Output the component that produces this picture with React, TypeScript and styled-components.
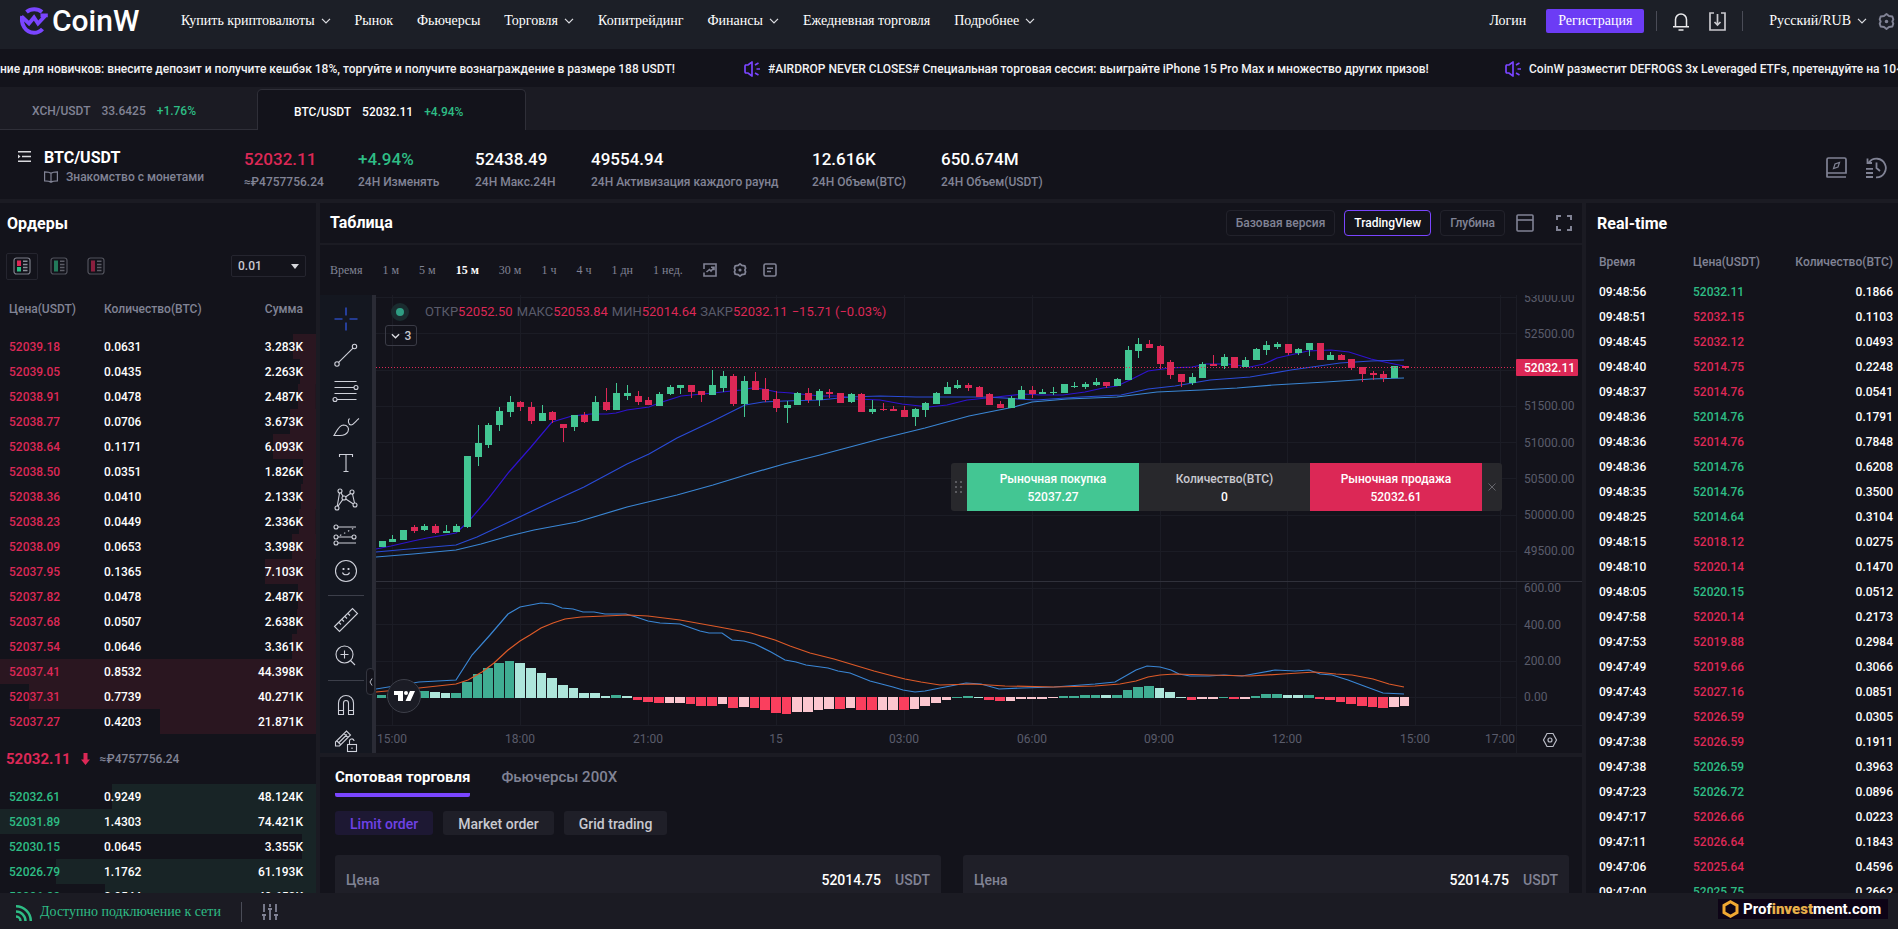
import React from 'react';
import styled, { createGlobalStyle, css } from 'styled-components';

const color = {
  page: '#13131b',
  bar: '#1b1b23',
  header: '#1c1f27',
  field: '#1f1f28',
  line: '#25252f',
  muted: '#818395',
  axis: '#5a5c6b',
  text: '#ffffff',
  soft: '#c8c9d0',
  up: '#2ebd85',
  upFill: '#43c693',
  down: '#dc2856',
  brand: '#7a45ff',
};
const serif = "'Liberation Serif', serif";
const sans = "Roboto, 'Liberation Sans', sans-serif";

const GlobalStyle = createGlobalStyle`
  *, *::before, *::after { box-sizing: border-box; }
  html, body, #root { height: 100%; }
  body { margin: 0; background: ${color.page}; color: ${color.text}; font: 500 12px/16px ${sans}; overflow: hidden; }
  button, input, select { font: inherit; color: inherit; background: none; border: 0; padding: 0; margin: 0; }
  button { cursor: pointer; white-space: nowrap; }
  a { color: inherit; text-decoration: none; }
  h1, h2, p { margin: 0; }
  svg { display: block; flex: none; }
`;

/* ---------- page frame ---------- */

const Page = styled.div`
  display: flex;
  flex-direction: column;
  height: 100vh;
  overflow: hidden;
`;

const Panels = styled.main`
  flex: 1;
  min-height: 0;
  display: grid;
  grid-template-columns: 316px minmax(0, 1fr) 312px;
  gap: 4px;
  padding-top: 4px;
  background: ${color.bar};
`;

const Panel = styled.section`
  display: flex;
  flex-direction: column;
  min-width: 0;
  min-height: 0;
  overflow: hidden;
  background: ${color.page};
`;

const Title = styled.h2<{ $pad?: number }>`
  flex: none;
  font-size: 16px;
  font-weight: 700;
  line-height: 42px;
  padding-left: ${p => p.$pad ?? 0}px;
`;

/* ---------- header ---------- */

const Header = styled.header`
  display: flex;
  flex: none;
  align-items: flex-start;
  height: 49px;
  padding: 0 3px 0 20px;
  background: ${color.header};
  font: 14px/42px ${serif};
  white-space: nowrap;
`;

const Logo = styled.a`
  display: flex;
  align-items: center;
  gap: 3px;
  width: 161px;
  height: 42px;
  font: 500 30px/42px ${sans};
`;

const Nav = styled.nav`
  display: flex;
  gap: 24px;
  flex: 1;
`;

const NavItem = styled.button`
  display: flex;
  align-items: center;
  gap: 6px;
  height: 41px;
`;

const Account = styled.div`
  display: flex;
  align-items: center;
  height: 42px;
`;

const Register = styled.button`
  width: 98px;
  height: 24px;
  margin: 0 12px 0 20px;
  border-radius: 2px;
  background: #6c3cf5;
  line-height: 24px;
`;

const Divider = styled.span<{ $gap?: number }>`
  width: 1px;
  height: 20px;
  margin: 0 ${p => p.$gap ?? 0}px 0 0;
  background: #4a4c57;
`;

const IconButton = styled.button<{ $left?: number; $right?: number }>`
  display: flex;
  margin-left: ${p => p.$left ?? 0}px;
  margin-right: ${p => p.$right ?? 0}px;
`;

/* ---------- announcements ---------- */

const Announcements = styled.div`
  display: flex;
  flex: none;
  align-items: center;
  gap: 88px;
  height: 38px;
  padding-top: 1px;
  overflow: hidden;
  white-space: nowrap;
  color: #f2f2f4;
`;

const Announcement = styled.a<{ $width?: number }>`
  display: flex;
  flex: none;
  align-items: center;
  gap: 8px;
  width: ${p => (p.$width ? `${p.$width}px` : 'auto')};
`;

/* ---------- pair tabs ---------- */

const PairTabs = styled.div`
  display: flex;
  flex: none;
  align-items: flex-end;
  height: 43px;
  background: ${color.bar};
`;

const PairTab = styled.button<{ $active?: boolean }>`
  display: flex;
  align-items: center;
  gap: 11px;
  height: 41px;
  width: 257px;
  padding: 4px 0 0 32px;
  color: ${color.muted};
  border-bottom: 1px solid #2f2f38;
  ${p =>
    p.$active &&
    css`
      width: 269px;
      padding-left: 36px;
      color: ${color.text};
      background: ${color.page};
      border: 1px solid #2f2f38;
      border-bottom: 0;
      border-radius: 5px 5px 0 0;
    `}
`;

const Up = styled.span`
  color: ${color.up};
`;

/* ---------- pair summary ---------- */

const Summary = styled.div`
  display: flex;
  flex: none;
  height: 69px;
  padding: 17px 11px 0 17px;
`;

const PairName = styled.div`
  width: 200px;
  margin-left: 12px;
  color: ${color.muted};
`;

const Pair = styled.h1`
  font-size: 16px;
  font-weight: 700;
  line-height: 22px;
  color: ${color.text};
`;

const Intro = styled.a`
  display: flex;
  align-items: center;
  gap: 8px;
`;

const Stats = styled.dl`
  display: grid;
  grid-template-columns: 74px 77px 76px 181px 89px 96px;
  gap: 40px;
  flex: 1;
  margin: 0;
  white-space: nowrap;
`;

const Stat = styled.div`
  display: flex;
  flex-direction: column-reverse;
  justify-content: flex-end;
  dt {
    line-height: 22px;
    color: ${color.muted};
  }
`;

const StatValue = styled.dd<{ $color: string }>`
  margin: 0;
  font-size: 17px;
  line-height: 24px;
  color: ${p => p.$color};
`;

const SummaryTools = styled.div`
  display: flex;
  gap: 18px;
  padding-top: 10px;
  align-items: flex-start;
`;

/* ---------- order book ---------- */

const BookControls = styled.div`
  display: flex;
  flex: none;
  align-items: center;
  height: 42px;
  padding: 0 10px 0 6px;
`;

const BookMode = styled.button<{ $active?: boolean }>`
  display: flex;
  align-items: center;
  justify-content: center;
  width: 32px;
  height: 27px;
  margin-right: 5px;
  border: 1px solid ${p => (p.$active ? color.line : 'transparent')};
  border-radius: 2px;
  opacity: ${p => (p.$active ? 1 : 0.6)};
`;

const StepSelect = styled.label`
  position: relative;
  margin-left: auto;
  select {
    appearance: none;
    display: block;
    width: 75px;
    height: 22px;
    padding-left: 6px;
    border: 1px solid ${color.line};
    border-radius: 2px;
    color: ${color.soft};
  }
  svg {
    position: absolute;
    right: 7px;
    top: 9px;
    pointer-events: none;
  }
`;

const DataTable = styled.table`
  flex: none;
  width: 100%;
  border-collapse: collapse;
  table-layout: fixed;
  th {
    height: 34px;
    font-weight: 500;
    color: ${color.muted};
  }
  th, td {
    padding: 0;
    text-align: left;
    white-space: nowrap;
  }
  th:last-child, td:last-child {
    text-align: right;
  }
`;

const BookTable = styled(DataTable)`
  th { height: 47px; padding-bottom: 4px; }
  th:first-child, td:first-child { width: 104px; padding-left: 9px; }
  th:last-child, td:last-child { padding-right: 13px; }
`;

const DepthRow = styled.tr<{ $side: 'ask' | 'bid' }>`
  height: 25px;
  background: linear-gradient(${p => (p.$side === 'ask' ? '#2a1620, #2a1620' : '#182426, #182426')}) right / 0 100% no-repeat;
  td:first-child { color: ${p => (p.$side === 'ask' ? color.down : color.up)}; }
`;

const LastPrice = styled.div`
  display: flex;
  flex: none;
  align-items: center;
  gap: 10px;
  height: 50px;
  padding-left: 6px;
  color: ${color.muted};
  strong { font-size: 15px; font-weight: 700; color: ${color.down}; }
`;

/* ---------- trades ---------- */

const TradesTable = styled(DataTable)`
  th:first-child, td:first-child { width: 107px; padding-left: 13px; }
  th:nth-child(2) { width: 90px; }
  th:last-child, td:last-child { padding-right: 5px; }
  tbody tr { height: 25px; }
`;

const TradePrice = styled.td<{ $up: boolean }>`
  color: ${p => (p.$up ? color.up : color.down)};
`;

/* ---------- chart ---------- */

const ChartHeader = styled.div`
  display: flex;
  flex: none;
  align-items: center;
  height: 42px;
  padding: 0 10px;
  border-bottom: 2px solid ${color.bar};
`;

const ViewTabs = styled.div`
  display: flex;
  gap: 9px;
  margin-left: auto;
`;

const ViewTab = styled.button<{ $active?: boolean }>`
  height: 26px;
  padding: 0 9px;
  border: 1px solid ${p => (p.$active ? color.brand : '#22222b')};
  border-radius: 4px;
  color: ${p => (p.$active ? color.text : color.muted)};
`;

const Intervals = styled.div`
  display: flex;
  flex: none;
  align-items: center;
  gap: 20px;
  height: 50px;
  padding: 0 10px;
  font: 12px/16px ${serif};
  color: ${color.muted};
`;

const Interval = styled.button<{ $active?: boolean }>`
  ${p => p.$active && `color: ${color.text}; font-weight: 700;`}
`;

const IntervalTools = styled.div`
  display: flex;
  gap: 16px;
`;

const ChartBody = styled.div`
  position: relative;
  display: flex;
  flex: none;
  height: 458px;
  overflow: hidden;
`;

const DrawingTools = styled.div`
  display: flex;
  flex: none;
  flex-direction: column;
  align-items: center;
  width: 56px;
  padding-top: 6px;
  border-right: 4px solid #2a2b35;
  background: #141720;
  hr { flex: none; width: 36px; height: 1px; margin: 6px 0; border: 0; background: #3c3f4a; }
`;

const DrawingTool = styled.button`
  display: flex;
  flex: none;
  align-items: center;
  justify-content: center;
  width: 36px;
  height: 36px;
`;

const CollapseHandle = styled.button`
  position: absolute;
  left: 46px;
  top: 373px;
  display: flex;
  align-items: center;
  justify-content: center;
  width: 9px;
  height: 27px;
  border: 1px solid #33353f;
  border-radius: 4px;
  background: ${color.page};
`;

const Plot = styled.div`
  flex: 1;
  min-width: 0;
  svg { width: 100%; height: 100%; }
  text { font: 400 12px ${sans}; fill: ${color.axis}; }
`;

const Legend = styled.div`
  position: absolute;
  left: 71px;
  top: 8px;
  display: flex;
  align-items: center;
  gap: 4px;
  font-weight: 400;
  font-size: 13px;
  line-height: 18px;
  color: ${color.axis};
  white-space: nowrap;
  b { font-weight: 400; color: ${color.down}; }
`;

const Status = styled.span`
  width: 18px;
  height: 18px;
  margin-right: 12px;
  border: 5px solid #1a2c2f;
  border-radius: 50%;
  background: #2f9e83;
`;

const IndicatorCount = styled.button`
  position: absolute;
  left: 65px;
  top: 30px;
  display: flex;
  align-items: center;
  justify-content: center;
  gap: 5px;
  width: 32px;
  height: 21px;
  border: 1px solid #3a3b46;
  border-radius: 3px;
  color: ${color.soft};
`;

const QuickTrade = styled.div`
  position: absolute;
  right: 80px;
  top: 168px;
  display: grid;
  grid-template-columns: 16px 172px 171px 172px 20px;
  height: 48px;
  border-radius: 3px;
  overflow: hidden;
  background: #28282c;
  text-align: center;
`;

const QuickCell = styled.button<{ $fill: string }>`
  display: flex;
  flex-direction: column;
  align-items: center;
  justify-content: center;
  gap: 2px;
  padding-top: 2px;
  background: ${p => p.$fill};
`;

const QuickAmount = styled.label`
  display: flex;
  flex-direction: column;
  align-items: center;
  justify-content: center;
  gap: 2px;
  padding-top: 2px;
  color: ${color.soft};
  input { width: 100%; height: 16px; text-align: center; color: ${color.text}; }
`;

const Centered = styled.button`
  display: flex;
  align-items: center;
  justify-content: center;
`;

/* ---------- order form ---------- */

const OrderArea = styled.div`
  flex: 1;
  min-height: 0;
  overflow: hidden;
  padding: 0 13px 0 15px;
  border-top: 4px solid ${color.bar};
`;

const OrderTabs = styled.div`
  display: flex;
  gap: 31px;
  height: 40px;
`;

const OrderTab = styled.button<{ $active?: boolean }>`
  padding-top: 4px;
  border-bottom: 4px solid ${p => (p.$active ? color.brand : 'transparent')};
  border-radius: 2px;
  font-size: 15px;
  font-weight: ${p => (p.$active ? 700 : 500)};
  color: ${p => (p.$active ? color.text : color.muted)};
`;

const OrderTypes = styled.div`
  display: flex;
  gap: 10px;
  padding: 14px 0 20px;
`;

const OrderType = styled.button<{ $active?: boolean }>`
  height: 24px;
  padding: 2px 15px 0;
  border-radius: 3px;
  font-size: 14px;
  color: ${p => (p.$active ? '#6f42e6' : color.soft)};
  background: ${p => (p.$active ? '#1d1833' : color.field)};
`;

const PriceFields = styled.div`
  display: grid;
  grid-template-columns: 1fr 1fr;
  gap: 22px;
`;

const PriceField = styled.label`
  display: flex;
  align-items: center;
  height: 50px;
  padding: 0 11px;
  border-radius: 3px;
  background: ${color.field};
  font-size: 14px;
  color: ${color.muted};
  input { flex: 1; min-width: 0; padding-right: 14px; text-align: right; color: ${color.text}; }
`;

/* ---------- footer ---------- */

const Footer = styled.footer`
  display: flex;
  flex: none;
  align-items: center;
  height: 36px;
  padding: 2px 10px 0 16px;
  background: ${color.bar};
`;

const Connection = styled.span`
  display: flex;
  align-items: center;
  gap: 7px;
  margin-right: 20px;
  font: 14px/20px ${serif};
  color: ${color.up};
`;

const Watermark = styled.a`
  display: flex;
  align-items: center;
  gap: 4px;
  height: 20px;
  width: 170px;
  margin: 0 0 6px auto;
  padding-left: 4px;
  background: #0d0416;
  font: 700 15px/20px ${sans};
  b { color: #e8b04a; }
`;

/* ---------- icons ---------- */

const Chevron = () => (
  <svg width="10" height="6" viewBox="0 0 10 6" fill="none" stroke="#dcdde2" strokeWidth="1.2"><path d="M1 .8 5 5l4-4.2" /></svg>
);

const Speaker = () => (
  <svg width="16" height="16" viewBox="0 0 16 16" fill="none" stroke={color.brand} strokeWidth="1.7">
    <path d="M8 .2v15.6M8 1 4 4H1.500L1 5v6l.5 1H4l4 3M11 4l3.500-2M12.500 8H16M11 12l3.500 2" />
  </svg>
);

const Hex = ({ size = 16, width = 1.8 }: { size?: number; width?: number }) => (
  <svg width={size} height={size} viewBox="0 0 16 16" fill="none" stroke={color.muted} strokeWidth={width}>
    <path d="M8 1 10.300 2.800l3.200.5.900 2.700-.9 2 .9 2-.9 2.700-3.200.5L8 15l-2.300-1.800-3.200-.5L1.600 10l.9-2-.9-2 .9-2.700 3.200-.5z" strokeLinejoin="round" />
    <circle cx="8" cy="8" r=".8" fill={color.muted} />
  </svg>
);

const BookIcon = ({ left, right }: { left: string; right: string }) => (
  <svg width="18" height="18" viewBox="0 0 18 18" fill="none">
    <rect x="1" y="1" width="16" height="16" rx="2.5" stroke="#7b7d88" strokeWidth="1.2" />
    <path d="M4 3.500h4v5.500H4z" fill={left} />
    <path d={left === right ? 'M4 9h4v5.500H4z' : 'M4 10h4v4.500H4z'} fill={right} />
    <path d="M10 4.3h4.5M10 7.400h4.500M10 10.500h4.500M10 13.600h4.500" stroke="#8b8d98" strokeWidth="1.5" />
  </svg>
);

const toolPaths: Record<string, React.ReactNode> = {
  Crosshair: <path d="M14 2.500v8M14 17.500v8M2.500 14h8M17.500 14h8" stroke="#3560ff" />,
  'Trend line': <><circle cx="5" cy="23" r="2.2" /><circle cx="22.500" cy="5.500" r="2.2" /><path d="M6.600 21.400 21 7.100" /></>,
  Fibonacci: <><path d="M2.500 4.500h22M2.500 10.500h19.500M2.500 16.500h22M5 22.500h19.500" /><circle cx="24" cy="10.500" r="2" /><circle cx="3" cy="22.500" r="2" /></>,
  Brush: <path d="M2 22.500C5 18 6.500 12.500 11.500 12c4 0 6 3 4.500 6.500-1.800 3.500-5 4-8 4zM17.500 5.500c-1.800 1.500-1.500 6 1.500 6.500 3-.5 5-4.500 8-6.500" />,
  Text: <path d="M7.500 8V5.500h13V8M14 5.500v17M11.500 22.500h5" />,
  Pattern: <><circle cx="8" cy="6" r="2" /><circle cx="20" cy="7" r="2" /><circle cx="12" cy="13" r="2" /><circle cx="5" cy="23" r="2" /><circle cx="23" cy="20" r="2" /><path d="M7.500 8 5.300 21M9 8l2.200 3.400M18.500 8.500 13.500 12M20.500 9l2 9M10.700 14.600 6 21.200M13.800 14 21 18.800" /></>,
  Forecast: <><circle cx="4" cy="6" r="2" /><circle cx="4" cy="16" r="2" /><circle cx="22" cy="16" r="2" /><circle cx="4" cy="22" r="2" /><path d="M6 6h18M6 16h14M6 22h18" /><path d="M8 14.500 22 7" strokeDasharray="1.500 3" /></>,
  Emoji: <><circle cx="14" cy="14" r="10.500" /><path d="M10.500 15.500c1 3 6 3 7 0" /><path d="M11.500 11v2M16.500 11v2" strokeWidth="1.800" /></>,
  Ruler: <path d="m2.500 20.500 18-18 5 5-18 18zM7 16.500l2 2M10 13.500l2 2M13 10.500l2 2M16 7.500l2 2" />,
  Zoom: <><circle cx="12.500" cy="12.500" r="8.500" /><path d="M12.500 8.500v8M8.500 12.500h8M18.500 18.500 23 23" /></>,
  Magnet: <path d="M6.500 23.500V12a7.500 7.500 0 0 1 15 0v11.500h-5V12a2.500 2.500 0 0 0-5 0v11.500zM6.500 19.500h5M16.500 19.500h5" />,
  'Lock drawings': <><path d="M3.500 15 14.500 4l4 4-11 11H3.500zM12 6.500l4 4M5 14l4 4M7 15.500l8-8" /><rect x="15.500" y="17.500" width="9" height="7" /><path d="M17.500 17.500v-3a2.300 2.300 0 0 1 4.600-.5M20 20.500v1.500" /></>,
};

const ToolButton = ({ name }: { name: string }) => (
  <DrawingTool aria-label={name}>
    <svg width="28" height="28" viewBox="0 0 28 28" fill="none" stroke="#cfd1da" strokeWidth="1.1">{toolPaths[name]}</svg>
  </DrawingTool>
);

/* ---------- data ---------- */

const nav: [string, boolean][] = [
  ['Купить криптовалюты', true], ['Рынок', false], ['Фьючерсы', false], ['Торговля', true], ['Копитрейдинг', false],
  ['Финансы', true], ['Ежедневная торговля', false], ['Подробнее', true],
];

const stats: [string, string, string][] = [
  ['52032.11', '≈₽4757756.24', color.down],
  ['+4.94%', '24H Изменять', color.up],
  ['52438.49', '24H Макс.24H', color.text],
  ['49554.94', '24H Активизация каждого раунд', color.text],
  ['12.616K', '24H Объем(BTC)', color.text],
  ['650.674M', '24H Объем(USDT)', color.text],
];

const asks = `52039.18 0.0631 3.283
52039.05 0.0435 2.263
52038.91 0.0478 2.487
52038.77 0.0706 3.673
52038.64 0.1171 6.093
52038.50 0.0351 1.826
52038.36 0.0410 2.133
52038.23 0.0449 2.336
52038.09 0.0653 3.398
52037.95 0.1365 7.103
52037.82 0.0478 2.487
52037.68 0.0507 2.638
52037.54 0.0646 3.361
52037.41 0.8532 44.398
52037.31 0.7739 40.271
52037.27 0.4203 21.871`.split('\n').map(r => r.split(' '));

const bids = `52032.61 0.9249 48.124
52031.89 1.4303 74.421
52030.15 0.0645 3.355
52026.79 1.1762 61.193
52026.22 0.9544 49.650`.split('\n').map(r => r.split(' '));

const trades = `09:48:56 52032.11 0.1866 u
09:48:51 52032.15 0.1103 d
09:48:45 52032.12 0.0493 d
09:48:40 52014.75 0.2248 d
09:48:37 52014.76 0.0541 d
09:48:36 52014.76 0.1791 u
09:48:36 52014.76 0.7848 d
09:48:36 52014.76 0.6208 u
09:48:35 52014.76 0.3500 u
09:48:25 52014.64 0.3104 u
09:48:15 52018.12 0.0275 d
09:48:10 52020.14 0.1470 d
09:48:05 52020.15 0.0512 u
09:47:58 52020.14 0.2173 d
09:47:53 52019.88 0.2984 d
09:47:49 52019.66 0.3066 d
09:47:43 52027.16 0.0851 d
09:47:39 52026.59 0.0305 d
09:47:38 52026.59 0.1911 d
09:47:38 52026.59 0.3963 u
09:47:23 52026.72 0.0896 u
09:47:17 52026.66 0.0223 d
09:47:11 52026.64 0.1843 d
09:47:06 52025.64 0.4596 d
09:47:00 52025.75 0.2662 u`.split('\n').map(r => r.split(' '));

/* Candles: direction, high, body top, body bottom, low, in thirds of a pixel below the pane's top. */
const candles = `u 738 738 755 755;u 720 732 741 741;u 705 705 735 735;d 690 696 708 714;u 687 693 705 708;d 687 693 714 717;u 690 708 714 714;u 687 693 711 711;u 483 483 696 699;u 390 444 486 513;u 384 390 450 459;u 336 348 390 408;u 303 321 351 366;d 318 321 336 348;d 321 336 378 387;u 330 354 378 378;d 348 351 375 384;d 387 387 399 441;u 360 360 396 408;d 351 360 381 384;u 303 321 378 378;d 279 321 345 348;u 264 294 345 345;u 270 294 303 315;d 288 303 321 330;d 306 315 330 330;u 291 297 333 333;u 270 276 297 300;u 270 270 279 297;d 270 270 291 309;d 288 288 300 321;u 225 270 300 300;u 228 243 279 291;d 237 243 327 333;u 243 258 327 366;d 231 258 285 285;d 249 282 315 321;d 288 312 339 351;u 318 330 339 384;u 291 294 330 330;d 279 294 315 324;u 282 288 315 333;d 282 291 297 309;d 294 294 324 324;u 294 297 321 324;d 294 297 351 351;u 315 342 351 357;d 324 342 345 348;d 333 342 348 348;d 333 345 366 366;u 339 342 366 393;u 321 324 345 366;u 291 294 327 327;u 261 276 297 297;u 255 270 279 282;d 264 270 279 288;d 273 276 306 306;d 294 297 330 330;d 318 327 339 339;u 303 309 339 339;u 273 285 312 312;d 273 285 297 309;u 282 291 297 297;u 276 291 294 300;u 267 267 294 294;u 261 273 276 279;u 261 267 276 282;u 249 261 270 273;d 261 261 273 279;u 249 252 273 273;u 153 165 255 255;u 129 147 168 189;d 135 147 159 159;d 150 153 207 222;d 195 201 240 252;d 237 237 261 276;u 234 246 264 270;u 201 207 249 249;d 180 207 213 213;u 177 186 213 222;d 186 186 219 219;u 186 195 216 216;u 159 162 195 195;u 138 150 165 180;u 141 147 156 162;d 147 147 174 180;u 159 162 174 180;u 144 144 165 183;d 144 144 195 195;u 171 180 195 195;d 177 180 195 195;d 192 192 219 225;d 216 216 237 261;d 228 234 240 255;d 228 237 249 261;u 213 213 249 249;d 213 213 219 222`
  .split(';').map(c => {
    const [dir, ...v] = c.split(' ');
    return { up: dir === 'u', v: v.map(n => Number(n) / 3) };
  });

/* Histogram: shade and height in thirds of a pixel; g/l rise above zero, r/p fall below it. */
const histogram = 'g9 g12 g15 g18 g21 l18 l15 g15 g48 g72 g90 g105 g111 l105 l90 l75 l60 l39 l30 l15 l15 l6 g9 l6 r9 r15 r18 p18 p18 r21 r27 r27 p21 r33 p30 r33 r39 r48 r51 p45 p45 p39 p36 r36 p33 r39 r39 p39 p39 r39 p36 p27 p18 p9 g3 g6 l3 r9 r12 p12 p6 p6 p6 p3 g6 g6 g9 g9 l9 g9 g24 g33 g36 l30 l18 l3 r9 p6 p6 g3 r6 p6 g6 g12 g12 l9 l9 g9 r6 r9 r15 r21 r27 r30 r33 p30 p27'.split(' ');
const shades: Record<string, string> = { g: '#40ad93', l: '#aee6db', r: '#fa3f5e', p: '#fbc6cf' };

const lines: [string, string][] = [
  ['#2f13cf', '0,254 15,251 37,246 51,243 69,240 80,238 92,227 112,204 133,177 155,152 176,127 196,121 215,119 231,119 240,118 251,115 273,112 283,108 305,101 337,98 365,95 376,93 387,94 401,97 415,98 444,101 465,101 480,104 504,105 526,109 553,112 571,110 591,105 611,103 647,99 665,100 687,100 709,97 727,93 741,91 754,85 772,76 794,73 816,72 830,69 852,69 874,72 888,69 901,63 932,56 955,55 973,57 995,64 1013,68 1028,71'],
  ['#2a4bd6', '0,257 33,254 80,250 101,242 133,227 173,208 208,192 251,169 273,159 301,143 337,126 369,110 387,107 408,106 444,105 473,102 504,101 540,102 611,102 660,105 705,102 745,100 772,94 799,91 834,85 874,82 915,75 964,68 995,66 1028,65'],
  ['#3a86d4', '0,262 37,259 80,255 105,249 133,241 158,235 201,227 251,212 301,200 337,190 373,179 408,169 444,160 504,144 549,133 593,121 638,112 656,107 691,104 741,102 781,97 825,95 861,93 897,90 950,87 995,84 1028,83'],
  ['#3a86d4', '0,394 43,387 80,385 96,360 114,340 132,319 144,312 165,308 176,309 186,313 197,314 207,317 218,317 229,319 250,319 260,322 272,326 284,328 304,329 324,336 333,338 346,338 356,345 368,346 379,349 395,357 409,365 420,367 430,370 452,373 462,376 474,378 494,386 517,392 527,395 539,397 549,396 564,393 590,388 605,389 623,394 646,393 678,392 719,389 739,387 760,375 771,371 784,372 795,375 803,379 814,381 833,381 848,380 866,381 899,375 919,376 933,375 944,379 956,380 972,385 988,391 1007,398 1028,399'],
  ['#dd5a28', '0,397 43,393 80,389 92,385 106,377 118,368 132,355 144,346 154,340 165,333 177,328 189,324 205,322 229,321 252,320 272,321 304,325 343,332 375,338 399,345 414,351 434,358 458,364 478,370 498,376 517,381 529,384 545,387 564,390 597,389 629,391 678,392 719,391 744,389 760,386 772,382 784,380 799,379 833,380 874,381 907,379 939,377 960,379 976,380 997,384 1013,389 1028,392'],
];

const STEP = 10.656;
const candleX = (i: number) => Math.round(5.8 + i * STEP);

const PriceChart = () => (
  <svg viewBox="0 0 1206 458" preserveAspectRatio="xMaxYMin slice" role="img" aria-label="BTC/USDT, 15 м">
    <g stroke="#1b1c25" shapeRendering="crispEdges">
      {[2, 38, 75, 111, 147, 183, 220, 256, 293, 329, 366, 402].map(y => <path key={y} d={`M0 ${y}.5H1140`} />)}
      {[16, 144, 272, 400, 528, 656, 784, 911, 1039, 1124].map(x => <path key={x} d={`M${x}.5 0V430`} />)}
      <path d="M0 430.5H1206M1140.500 0V458" />
      <path d="M0 286.5H1206" stroke="#30313b" />
    </g>
    <g shapeRendering="crispEdges">
      {histogram.map((bar, i) => {
        const h = Math.max(1, Math.round(Number(bar.slice(1)) / 3));
        const above = bar[0] === 'g' || bar[0] === 'l';
        return <rect key={i} x={candleX(i) - 5} y={above ? 403 - h : 402} width={candleX(i + 1) - candleX(i) - 1} height={h} fill={shades[bar[0]]} />;
      })}
    </g>
    {lines.map(([stroke, points], i) => <polyline key={i} points={points} fill="none" stroke={stroke} strokeWidth="1.200" />)}
    <g shapeRendering="crispEdges">
      {candles.map(({ up, v: [high, top, bottom, low] }, i) => (
        <g key={i} fill={up ? color.upFill : color.down}>
          <rect x={candleX(i)} y={high} width="1" height={low - high} />
          <rect x={candleX(i) - 3} y={top} width="7" height={Math.max(1, bottom - top)} />
        </g>
      ))}
    </g>
    <path d="M0 72.5H1140" stroke={color.down} strokeDasharray="1 2" shapeRendering="crispEdges" />
    <g>
      {([[53000, 2], [52500, 38], [51500, 110], [51000, 147], [50500, 183], [50000, 219], [49500, 255]] as const).map(([p, y]) => (
        <text key={p} x="1148" y={y + 5}>{p}.00</text>
      ))}
      {([[600, 293], [400, 330], [200, 366], [0, 402]] as const).map(([p, y]) => (
        <text key={p} x="1148" y={y + 4}>{p}.00</text>
      ))}
    </g>
    <g textAnchor="middle">
      {([['15:00', 16], ['18:00', 144], ['21:00', 272], ['15', 400], ['03:00', 528], ['06:00', 656], ['09:00', 783], ['12:00', 911], ['15:00', 1039], ['17:00', 1124]] as const).map(([t, x]) => (
        <text key={x} x={x} y="448">{t}</text>
      ))}
    </g>
    <rect x="1140" y="64" width="62" height="17" rx="1" fill={color.down} />
    <text x="1148" y="77" style={{ fill: '#fff', fontWeight: 500 }}>52032.11</text>
    <g fill="none" stroke="#b9bbc5" strokeWidth="1.200">
      <path d="m1171 438.500h6l3.500 6.500-3.500 6.500h-6l-3.500-6.500z" /><circle cx="1174" cy="445" r="2" />
    </g>
    <circle cx="28" cy="401" r="16.500" fill="#1b1c25" stroke="#3d3f49" />
    <path d="M18 396h9v10h-5v-6h-4zM34 396h5l-4.500 10h-5z" fill="#fff" />
    <circle cx="30" cy="398" r="2" fill="#fff" />
  </svg>
);

const BookRows = ({ rows, side, max }: { rows: string[][]; side: 'ask' | 'bid'; max: number }) => (
  <>
    {rows.map(([price, amount, total]) => (
      <DepthRow key={price} $side={side} style={{ backgroundSize: `${(Number(total) / max) * 100}% 100%` }}>
        <td>{price}</td>
        <td>{amount}</td>
        <td>{total}K</td>
      </DepthRow>
    ))}
  </>
);

const OrderBook = () => (
  <Panel>
    <Title $pad={7}>Ордеры</Title>
    <BookControls>
      <BookMode $active aria-label="Все ордеры"><BookIcon left={color.down} right={color.up} /></BookMode>
      <BookMode aria-label="Покупка"><BookIcon left={color.up} right={color.up} /></BookMode>
      <BookMode aria-label="Продажа"><BookIcon left={color.down} right={color.down} /></BookMode>
      <StepSelect>
        <select aria-label="Шаг цены" defaultValue="0.01"><option>0.01</option></select>
        <svg width="8" height="5" viewBox="0 0 8 5" fill="#d5d6db"><path d="M0 0h8L4 5z" /></svg>
      </StepSelect>
    </BookControls>
    <BookTable>
      <thead><tr><th>Цена(USDT)</th><th>Количество(BTC)</th><th>Сумма</th></tr></thead>
      <tbody><BookRows rows={asks} side="ask" max={44.398} /></tbody>
    </BookTable>
    <LastPrice>
      <strong>52032.11</strong>
      <svg width="9" height="12" viewBox="0 0 9 12" fill={color.down}><path d="M2.500 0h4v6.500H9L4.500 12 0 6.500h2.500z" /></svg>
      <span>≈₽4757756.24</span>
    </LastPrice>
    <BookTable>
      <tbody><BookRows rows={bids} side="bid" max={74.421} /></tbody>
    </BookTable>
  </Panel>
);

const Trades = () => (
  <Panel>
    <Title $pad={11}>Real-time</Title>
    <TradesTable>
      <thead><tr><th>Время</th><th>Цена(USDT)</th><th>Количество(BTC)</th></tr></thead>
      <tbody>
        {trades.map(([time, price, amount, dir], i) => (
          <tr key={i}><td>{time}</td><TradePrice $up={dir === 'u'}>{price}</TradePrice><td>{amount}</td></tr>
        ))}
      </tbody>
    </TradesTable>
  </Panel>
);

const ChartPanel = () => (
  <Panel>
    <ChartHeader>
      <Title>Таблица</Title>
      <ViewTabs>
        <ViewTab>Базовая версия</ViewTab>
        <ViewTab $active>TradingView</ViewTab>
        <ViewTab>Глубина</ViewTab>
      </ViewTabs>
      <IconButton aria-label="Макет" $left={11} $right={22}>
        <svg width="18" height="18" viewBox="0 0 18 18" fill="none" stroke={color.muted} strokeWidth="1.600"><rect x="1" y="1" width="16" height="16" rx="1" /><path d="M1 6h16" /></svg>
      </IconButton>
      <IconButton aria-label="На весь экран">
        <svg width="16" height="16" viewBox="0 0 16 16" fill="none" stroke={color.muted} strokeWidth="2"><path d="M1 5V1h4M11 1h4v4M15 11v4h-4M5 15H1v-4" /></svg>
      </IconButton>
    </ChartHeader>
    <Intervals>
      {['Время', '1 м', '5 м', '15 м', '30 м', '1 ч', '4 ч', '1 дн', '1 нед.'].map(t => (
        <Interval key={t} $active={t === '15 м'}>{t}</Interval>
      ))}
      <IntervalTools>
        <IconButton aria-label="Индикаторы">
          <svg width="14" height="14" viewBox="0 0 14 14" fill="none" stroke={color.muted} strokeWidth="1.600"><path d="M1 6V1h12v12H1V9.500M3.500 9l3-2.500 1.500 1.500 3-3.500M8 4.300h3v3" /></svg>
        </IconButton>
        <IconButton aria-label="Настройки"><Hex size={14} width={2} /></IconButton>
        <IconButton aria-label="Заметки">
          <svg width="14" height="14" viewBox="0 0 14 14" fill="none" stroke={color.muted} strokeWidth="1.600"><rect x="1" y="1" width="12" height="12" rx="1.500" /><path d="M4 5.200h6M4 8.500h4" /></svg>
        </IconButton>
      </IntervalTools>
    </Intervals>
    <ChartBody>
      <DrawingTools>
        {['Crosshair', 'Trend line', 'Fibonacci', 'Brush', 'Text', 'Pattern', 'Forecast', 'Emoji'].map(n => <ToolButton key={n} name={n} />)}
        <hr />
        {['Ruler', 'Zoom'].map(n => <ToolButton key={n} name={n} />)}
        <hr />
        {['Magnet', 'Lock drawings'].map(n => <ToolButton key={n} name={n} />)}
      </DrawingTools>
      <CollapseHandle aria-label="Свернуть панель">
        <svg width="4" height="8" viewBox="0 0 4 8" fill="none" stroke="#b9bbc5"><path d="M3 .5 1 4l2 3.500" /></svg>
      </CollapseHandle>
      <Plot><PriceChart /></Plot>
      <Legend>
        <Status />
        <span>ОТКР<b>52052.50</b></span>
        <span>МАКС<b>52053.84</b></span>
        <span>МИН<b>52014.64</b></span>
        <span>ЗАКР<b>52032.11</b></span>
        <b>−15.71 (−0.03%)</b>
      </Legend>
      <IndicatorCount>
        <svg width="9" height="6" viewBox="0 0 10 6" fill="none" stroke="#dcdde2" strokeWidth="1.500"><path d="M1 1l4 4 4-4" /></svg>
        3
      </IndicatorCount>
      <QuickTrade>
        <Centered aria-label="Переместить">
          <svg width="8" height="14" viewBox="0 0 8 14" fill="#5b5b60"><path d="M0 1h2v2H0zM5 1h2v2H5zM0 6h2v2H0zM5 6h2v2H5zM0 11h2v2H0zM5 11h2v2H5z" /></svg>
        </Centered>
        <QuickCell $fill={color.upFill}><span>Рыночная покупка</span><span>52037.27</span></QuickCell>
        <QuickAmount>Количество(BTC)<input defaultValue="0" /></QuickAmount>
        <QuickCell $fill={color.down}><span>Рыночная продажа</span><span>52032.61</span></QuickCell>
        <Centered aria-label="Закрыть">
          <svg width="8" height="8" viewBox="0 0 8 8" stroke="#65656b"><path d="m.5.5 7 7M7.500.5l-7 7" /></svg>
        </Centered>
      </QuickTrade>
    </ChartBody>
    <OrderArea>
      <OrderTabs>
        <OrderTab $active>Спотовая торговля</OrderTab>
        <OrderTab>Фьючерсы 200X</OrderTab>
      </OrderTabs>
      <OrderTypes>
        <OrderType $active>Limit order</OrderType>
        <OrderType>Market order</OrderType>
        <OrderType>Grid trading</OrderType>
      </OrderTypes>
      <PriceFields>
        <PriceField>Цена<input defaultValue="52014.75" />USDT</PriceField>
        <PriceField>Цена<input defaultValue="52014.75" />USDT</PriceField>
      </PriceFields>
    </OrderArea>
  </Panel>
);

const App = () => (
  <Page>
    <GlobalStyle />
    <Header>
      <Logo href="#">
        <svg width="29" height="28" viewBox="0 0 29 28" fill="none" stroke={color.brand} strokeWidth="4">
          <path d="M6.500 5C11 1.200 17.500 1.200 22 5" />
          <path d="M2.200 9C.8 17 5 25.500 14 25.800c4 0 6.500-1.500 8.500-3.800" />
          <path d="m1.500 9.500 7.500 7 5-6 4 6 8-8.500M20.500 8.300h7.300" strokeWidth="3.800" />
        </svg>
        CoinW
      </Logo>
      <Nav>
        {nav.map(([label, menu]) => <NavItem key={label}>{label}{menu && <Chevron />}</NavItem>)}
      </Nav>
      <Account>
        <a href="#">Логин</a>
        <Register>Регистрация</Register>
        <Divider $gap={16} />
        <IconButton aria-label="Уведомления" $right={20}>
          <svg width="16" height="19" viewBox="0 0 16 19" fill="none" stroke="#e9e9ec" strokeWidth="1.500"><path d="M2.500 14.500V7.500a5.500 5.500 0 0 1 11 0v7M0 14.700h16M5.500 18h5" /></svg>
        </IconButton>
        <IconButton aria-label="Скачать" $right={16}>
          <svg width="17" height="19" viewBox="0 0 17 19" fill="none" stroke="#c9c9ce" strokeWidth="1.700"><path d="M5 1H1v17h15V1h-4M8.500 2v11M5.500 10l3 3 3-3" /></svg>
        </IconButton>
        <Divider $gap={26} />
        <NavItem>Русский/RUB<Chevron /></NavItem>
        <IconButton aria-label="Настройки" $left={11}><Hex size={17} /></IconButton>
      </Account>
    </Header>
    <Announcements>
      <Announcement href="#" $width={656}>ние для новичков: внесите депозит и получите кешбэк 18%, торгуйте и получите вознаграждение в размере 188 USDT!</Announcement>
      <Announcement href="#" $width={673}><Speaker />#AIRDROP NEVER CLOSES# Специальная торговая сессия: выиграйте iPhone 15 Pro Max и множество других призов!</Announcement>
      <Announcement href="#"><Speaker />CoinW разместит DEFROGS 3x Leveraged ETFs, претендуйте на 10~</Announcement>
    </Announcements>
    <PairTabs>
      <PairTab><span>XCH/USDT</span><span>33.6425</span><Up>+1.76%</Up></PairTab>
      <PairTab $active><span>BTC/USDT</span><span>52032.11</span><Up>+4.94%</Up></PairTab>
    </PairTabs>
    <Summary>
      <IconButton aria-label="Список пар">
        <svg width="15" height="22" viewBox="0 0 15 22" stroke="#d9d9de" strokeWidth="1.600"><path d="M1 4.800h13M5 9.500h9M1 14.200h13" /><path d="m1 7.500 2.500 2L1 11.500z" fill="#d9d9de" stroke="none" /></svg>
      </IconButton>
      <PairName>
        <Pair>BTC/USDT</Pair>
        <Intro href="#">
          <svg width="14" height="12" viewBox="0 0 14 12" fill="none" stroke={color.muted} strokeWidth="1.200"><path d="M7 2.300C5.500 1 3 .8.6.8v9c2.400 0 5 .2 6.400 1.400 1.400-1.200 4-1.400 6.400-1.400v-9C11 .8 8.500 1 7 2.300zM7 2.300v9" /></svg>
          Знакомство с монетами
        </Intro>
      </PairName>
      <Stats>
        {stats.map(([value, label, c]) => <Stat key={label}><dt>{label}</dt><StatValue $color={c}>{value}</StatValue></Stat>)}
      </Stats>
      <SummaryTools>
        <IconButton aria-label="Руководство">
          <svg width="21" height="22" viewBox="0 0 21 22" fill="none" stroke={color.muted} strokeWidth="1.700"><path d="M1 20.500V2.500A1.500 1.500 0 0 1 2.500 1h16A1.500 1.500 0 0 1 20 2.500V16H1M1 20h19" /><path d="m13.500 5.500-1.500 4.500-4.500 1.500L9 7z" strokeWidth="1.200" /></svg>
        </IconButton>
        <IconButton aria-label="История">
          <svg width="22" height="22" viewBox="0 0 22 22" fill="none" stroke={color.muted} strokeWidth="1.800"><path d="M4 5.500A9.300 9.300 0 1 1 11 20.300M2.500 1.500V6H7M11.500 5.500V11l3.500 3M1 11.800h7M1 16h7M1 20h7" /></svg>
        </IconButton>
      </SummaryTools>
    </Summary>
    <Panels>
      <OrderBook />
      <ChartPanel />
      <Trades />
    </Panels>
    <Footer>
      <Connection>
        <svg width="17" height="17" viewBox="0 0 17 17" fill="none" stroke={color.up} strokeWidth="2.500"><path d="M0 12.500A4.500 4.500 0 0 1 4.500 17M0 7.500A9.500 9.500 0 0 1 9.500 17M0 2.200A14.800 14.800 0 0 1 14.800 17" /></svg>
        Доступно подключение к сети
      </Connection>
      <Divider $gap={20} />
      <IconButton aria-label="Параметры">
        <svg width="16" height="16" viewBox="0 0 16 16" stroke={color.muted} strokeWidth="1.800"><path d="M2 0v8M2 11v5M0 11h4M8 0v3M8 6v10M6 5h4M14 0v8M14 11v5M12 11h4" /></svg>
      </IconButton>
      <Watermark href="#">
        <svg width="17" height="18" viewBox="0 0 17 18" fill="none"><path d="M8.500 1.800 15 5.400v7.200l-6.500 3.600L2 12.600V5.400z" stroke="#f0a832" strokeWidth="3" /><path d="m8.500 5.500 3 1.700v3.500L8 13V9L6 8V7z" fill="#0d0416" /></svg>
        <span>Prof<b>invest</b>ment.com</span>
      </Watermark>
    </Footer>
  </Page>
);

export default App;
